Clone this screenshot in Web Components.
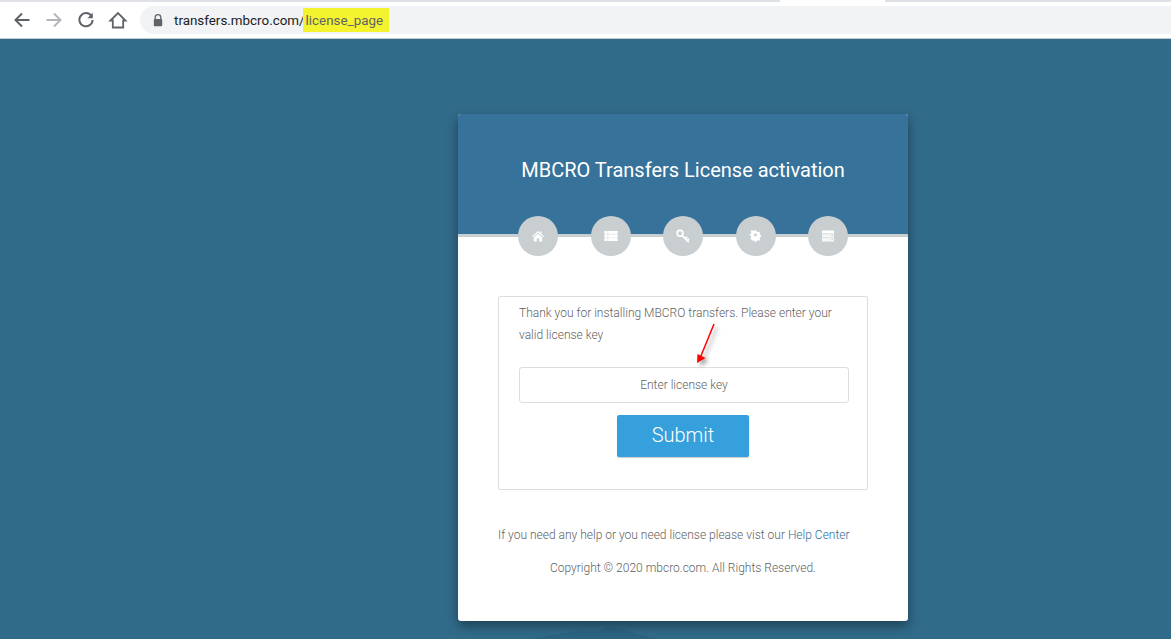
<!DOCTYPE html>
<html lang="en"><head><meta charset="utf-8"><title>License activation</title>
<style>
html,body{margin:0;padding:0;height:639px;overflow:hidden;background:#316b8a;font-family:Roboto,"Liberation Sans",sans-serif}
body{display:flex;flex-direction:column}
</style></head><body>
<browser-bar url="transfers.mbcro.com/" mark="license_page"></browser-bar>
<page-stage>
  <license-card title="MBCRO Transfers License activation">
    <step-dot slot="steps" icon="home"></step-dot>
    <step-dot slot="steps" icon="list"></step-dot>
    <step-dot slot="steps" icon="key"></step-dot>
    <step-dot slot="steps" icon="gear"></step-dot>
    <step-dot slot="steps" icon="table"></step-dot>
    <license-form></license-form>
    <span slot="help">If you need any help or you need license please vist our <a href="#" style="color:#2f7099;text-decoration:none">Help Center</a></span>
    <span slot="copy">Copyright © 2020 mbcro.com. All Rights Reserved.</span>
  </license-card>
</page-stage>
<script>
const def=(n,html,extra={})=>customElements.define(n,class extends HTMLElement{
  constructor(){super();this.attachShadow({mode:'open'}).innerHTML=typeof html==='function'?html(this):html}
  connectedCallback(){if(extra.init)extra.init(this)}
});
def('browser-bar',`<style>
:host{display:block;flex:none;height:39px;background:#fff;box-sizing:border-box;border-bottom:1px solid #c4c9d0;position:relative}
.strip{height:2px;background:#dee1e6;display:flex}
.strip i{display:block;width:105px;margin-left:780px;background:#fff;height:2px}
.row{display:flex;align-items:center;height:36px}
.nav{display:flex;align-items:center;width:140px;flex:none;padding-left:12px;box-sizing:border-box;gap:12px}
.nav svg{width:20px;height:20px;flex:none;display:block}
.omni{flex:1;height:28px;background:#f1f3f4;border-radius:14px 0 0 14px;display:flex;align-items:center;padding-left:13px;font:13.4px Roboto,"Liberation Sans",sans-serif;color:#202124}
.omni svg{width:10px;height:13px;margin-right:11px;flex:none}
mark{background:#f4f42e;color:#5f6368;height:24px;display:inline-flex;align-items:center;padding:0 6px 0 3px;margin-left:-2px}
</style>
<div class="strip"><i></i></div>
<div class="row"><div class="nav">
<svg viewBox="0 0 20 20" fill="none" stroke="#5f6368" stroke-width="2"><path d="M17.500 10H3.500M10 3.500 3.500 10l6.500 6.500"/></svg>
<svg viewBox="0 0 20 20" fill="none" stroke="#b4b6b9" stroke-width="2"><path d="M2.500 10h14M10 3.500l6.500 6.500-6.500 6.500"/></svg>
<svg viewBox="0 0 20 20" fill="none" stroke="#5f6368" stroke-width="2"><path d="M15.500 6A6.600 6.600 0 1 0 16.600 10"/><path d="M16.800 2.800v5.400h-5.400z" fill="#5f6368" stroke="none"/></svg>
<svg viewBox="0 0 20 20" fill="none" stroke="#5f6368" stroke-width="1.800"><path d="M2.500 10.500 10 3l7.500 7.500h-2.300v7H4.800v-7z" stroke-linejoin="miter"/></svg>
</div>
<div class="omni"><svg viewBox="0 0 10 13"><path d="M2.200 5.200V3.500a2.800 2.800 0 0 1 5.600 0v1.700" fill="none" stroke="#5f6368" stroke-width="1.300"/><rect x="0.800" y="5" width="8.400" height="7.200" rx="1" fill="#5f6368"/></svg><span id="u"></span><mark id="m"></mark></div></div>`,
{init(e){const s=e.shadowRoot;s.getElementById('u').textContent=e.getAttribute('url');s.getElementById('m').textContent=e.getAttribute('mark')}});

def('page-stage',`<style>
:host{display:block;flex:1;position:relative;overflow:hidden;background:#316b8a;padding:75px 0 0 458px}
svg{position:absolute;left:533px;top:588px;width:125px;height:12px}
</style><svg viewBox="0 0 125 12" preserveAspectRatio="none"><path d="M0 12 18 8 34 6 50 3 62 5 76 0 90 3 104 7 125 12z" fill="#2c6482"/></svg><slot></slot>`);

def('license-card',e=>`<style>
:host{display:block;position:relative;width:450px;height:507px;background:#fff;border-radius:3px;box-shadow:0 5px 12px rgba(0,0,0,.4);font:300 12px/22px Roboto,"Liberation Sans",sans-serif;color:#5f5f5f}
header{height:120px;background:#367299;border-radius:3px 3px 0 0;box-sizing:border-box;padding-top:42px;text-align:center;color:#fff;font:400 20px/28px Roboto,"Liberation Sans",sans-serif}
.line{height:3px;background:#c9cfd1}
.steps{display:flex;justify-content:center;gap:32.5px;margin-top:-21px;position:relative;height:40px}
.content{padding:40px 40px 0}
.help{margin-top:34px;height:22px;white-space:nowrap}
.copy{margin-top:11px;text-align:center;height:22px}
</style><header>${e.getAttribute('title')}</header><div class="line"></div>
<div class="steps"><slot name="steps"></slot></div>
<div class="content"><slot></slot><div class="help"><slot name="help"></slot></div><div class="copy"><slot name="copy"></slot></div></div>`);

const icons={
home:'<path d="M7 2 1 7.200l.7.800L7 3.400 12.300 8l.7-.8L10.500 5V2.500H9v1.200zM2.800 8.200V12.500h3V9.300h2.400v3.200h3V8.200L7 4.600z"/>',
list:'<path d="M.5 2h13v10H.5z" opacity=".55"/><path d="M.5 2h13v2.700H.5zM.5 5.700h13v2.700H.5zM.5 9.300h13V12H.5z"/><path d="M3.500 2h.7v10h-.7z" fill="#c9cfd1" opacity=".6"/>',
key:'<g fill="none" stroke="#fff"><circle cx="4" cy="4.300" r="2.900" stroke-width="1.700"/><path d="M6.300 6.600 12.800 13" stroke-width="1.900"/><path d="M9.300 9.600 11.300 7.800M11.200 11.400 13 9.600" stroke-width="1.500"/></g>',
gear:'<path fill-rule="evenodd" d="M5.800 1.500h2.400l.4 1.600 1.200.5 1.400-.9 1.700 1.700-.9 1.400.5 1.200 1.500.4v2.200l-1.500.4-.5 1.200.9 1.400-1.700 1.700-1.400-.9-1.200.5-.4 1.500H5.800l-.4-1.500-1.200-.5-1.400.9L1.100 11l.9-1.400-.5-1.200L0 8V5.800l1.500-.4.500-1.200-.9-1.400 1.700-1.700 1.400.9 1.200-.5zM7 5.200a1.800 1.800 0 1 0 0 3.600 1.800 1.800 0 0 0 0-3.600z" transform="translate(.7 .2) scale(.82)"/>',
table:'<path d="M1 1.500h12v3H1z"/><path d="M1 5.200h12v3.200H1zM1 9.100h12v3.400H1z" opacity=".82"/><path d="M10.500 5.900h1.300v1H10.500zM10.500 9.900h1.300v1H10.500z" fill="#c9cfd1"/>'};
def('step-dot',e=>`<style>
:host{display:flex;align-items:center;justify-content:center;width:40px;height:40px;border-radius:50%;background:#c9cfd1;flex:none}
svg{width:14px;height:14px;fill:#fff;display:block;margin-top:-1px}
</style><svg viewBox="0 0 14 14">${icons[e.getAttribute('icon')]}</svg>`);

def('license-form',`<style>
:host{display:block;position:relative;box-sizing:border-box;width:370px;height:194px;border:1px solid #ddd;border-radius:2px;padding:6px 20px 0}
p{margin:0;font:300 12px/21.5px Roboto,"Liberation Sans",sans-serif;color:#5f5f5f;width:330px}
.field{display:flex;align-items:center;justify-content:center;box-sizing:border-box;height:36px;width:330px;margin-top:21px;border:1px solid #ddd;border-radius:3px;font:300 12px Roboto,"Liberation Sans",sans-serif;color:#5f5f5f}
.btn{display:flex;align-items:center;justify-content:center;box-sizing:border-box;width:132px;height:42px;padding-bottom:2px;margin:12px 0 0 98px;background:#36a0dd;border-radius:2px;color:#fff;font:300 20px Roboto,"Liberation Sans",sans-serif;box-shadow:0 1px 1px rgba(0,0,0,.2)}
svg{position:absolute;left:190px;top:24px;width:30px;height:46px;overflow:visible;filter:drop-shadow(3px 3px 2px rgba(0,0,0,.4))}
</style>
<p>Thank you for installing MBCRO transfers. Please enter your valid license key</p>
<div class="field">Enter license key</div>
<div class="btn">Submit</div>
<svg viewBox="0 0 30 46"><path d="M25 3 11.500 36" stroke="#f00" stroke-width="1.500" fill="none"/><path d="M8 42 8.500 33 16.500 37z" fill="#f00"/></svg>`);
</script>
</body></html>
